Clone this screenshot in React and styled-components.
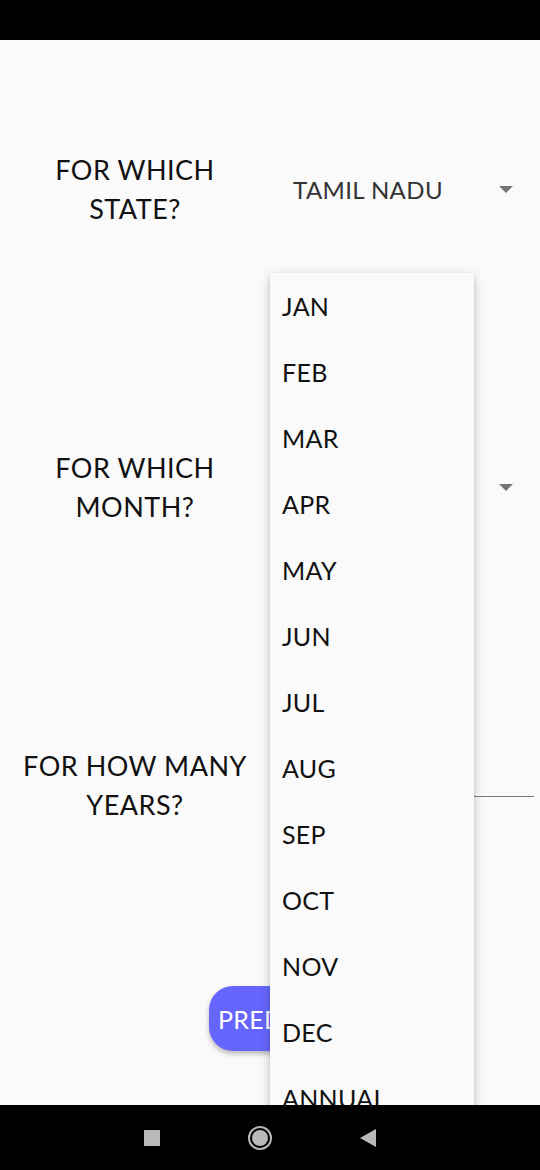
import React from "react";
import styled, { createGlobalStyle } from "styled-components";

const Global = createGlobalStyle`
  html, body { margin: 0; padding: 0; background: #000; }
  body { font-family: "Lato", "Open Sans", sans-serif; }
  * { box-sizing: border-box; }
`;

const Screen = styled.div`
  width: 540px;
  height: 1170px;
  display: flex;
  flex-direction: column;
  background: #fafafa;
  overflow: hidden;
`;

const StatusBar = styled.div`
  height: 40px;
  flex: none;
  background: #000;
`;

const Content = styled.div`
  position: relative;
  flex: 1;
  display: flex;
  flex-direction: column;
  overflow: hidden;
  background: #fafafa;
`;

const Row = styled.div`
  height: 298px;
  flex: none;
  display: grid;
  grid-template-columns: 270px 1fr;
  align-items: center;
  padding-right: 6px;
`;

const Label = styled.div`
  text-align: center;
  font-size: 27px;
  line-height: 39px;
  color: #111;
  letter-spacing: 0.5px;
  font-weight: 400;
`;

const Select = styled.div`
  display: flex;
  align-items: center;
  justify-content: space-between;
  padding: 0 21px 0 23px;
  height: 48px;
`;

const SelectValue = styled.span`
  font-size: 24px;
  color: #333;
  letter-spacing: 0.4px;
`;

const Caret = styled.span`
  width: 0;
  height: 0;
  border-left: 7px solid transparent;
  border-right: 7px solid transparent;
  border-top: 7px solid #757575;
`;

const Input = styled.div`
  height: 48px;
  margin: 0 0 0 10px;
  border-bottom: 1px solid #7a7a7a;
  transform: translateY(-12px);
`;

const ButtonArea = styled.div`
  display: flex;
  justify-content: center;
  padding-top: 52px;
`;

const PredictButton = styled.button`
  width: 122px;
  height: 65px;
  border: none;
  border-radius: 24px;
  background: #6666ff;
  color: #fff;
  font-family: inherit;
  font-size: 25px;
  letter-spacing: 0.3px;
  text-align: left;
  padding-left: 9px;
  box-shadow: 0 3px 5px rgba(0, 0, 0, 0.25);
`;

const Menu = styled.ul`
  position: absolute;
  left: 270px;
  top: 233px;
  width: 204px;
  margin: 0;
  padding: 0;
  list-style: none;
  background: #fafafa;
  border-radius: 2px;
  box-shadow: 0 4px 12px rgba(0, 0, 0, 0.22), 0 1px 3px rgba(0, 0, 0, 0.12);
`;

const MenuItem = styled.li`
  height: 66px;
  display: flex;
  align-items: center;
  padding-left: 12px;
  font-size: 25px;
  color: #111;
  letter-spacing: 0.3px;
`;

const NavBar = styled.div`
  height: 65px;
  flex: none;
  background: #000;
  display: flex;
  align-items: center;
  justify-content: center;
  gap: 88px;
  padding-right: 20px;
`;

const NavSquare = styled.span`
  width: 16px;
  height: 16px;
  background: #b9b9b9;
`;

const NavCircle = styled.span`
  width: 24px;
  height: 24px;
  border-radius: 50%;
  border: 2px solid #b9b9b9;
  display: flex;
  align-items: center;
  justify-content: center;
  &::after {
    content: "";
    width: 16px;
    height: 16px;
    border-radius: 50%;
    background: #b9b9b9;
  }
`;

const NavBack = styled.span`
  width: 0;
  height: 0;
  border-top: 9px solid transparent;
  border-bottom: 9px solid transparent;
  border-right: 16px solid #b9b9b9;
`;

const months = ["JAN","FEB","MAR","APR","MAY","JUN","JUL","AUG","SEP","OCT","NOV","DEC","ANNUAL"];

export default function App() {
  return (
    <Screen>
      <Global />
      <StatusBar />
      <Content>
        <Row>
          <Label>FOR WHICH<br />STATE?</Label>
          <Select>
            <SelectValue>TAMIL NADU</SelectValue>
            <Caret />
          </Select>
        </Row>
        <Row>
          <Label>FOR WHICH<br />MONTH?</Label>
          <Select>
            <SelectValue />
            <Caret />
          </Select>
        </Row>
        <Row>
          <Label>FOR HOW MANY<br />YEARS?</Label>
          <Input />
        </Row>
        <ButtonArea>
          <PredictButton>PREDICT</PredictButton>
        </ButtonArea>
        <Menu>
          {months.map((m) => (
            <MenuItem key={m}>{m}</MenuItem>
          ))}
        </Menu>
      </Content>
      <NavBar>
        <NavSquare />
        <NavCircle />
        <NavBack />
      </NavBar>
    </Screen>
  );
}
